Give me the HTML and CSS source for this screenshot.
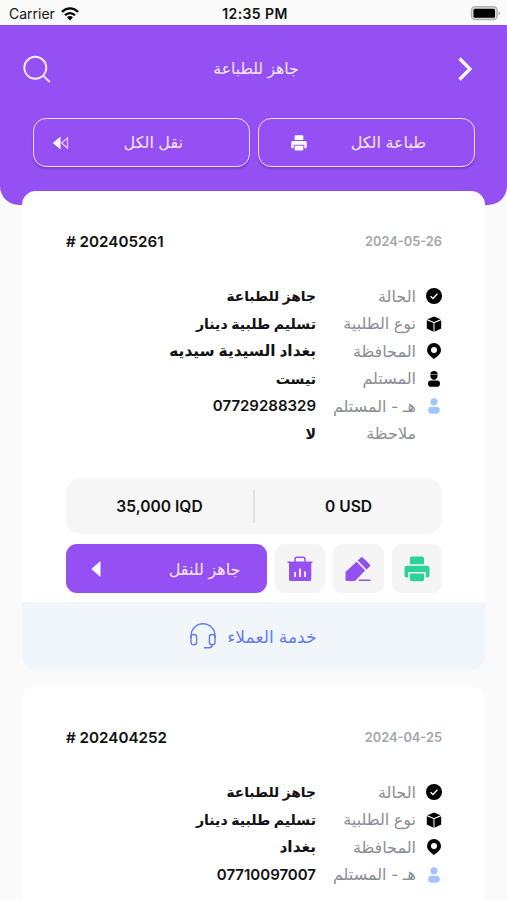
FILE: index.html
```html
<!DOCTYPE html>
<html lang="ar" dir="rtl">
<head>
    <meta charset="UTF-8">
    <meta name="viewport" content="width=device-width, initial-scale=1.0">
    <title>جاهز للطباعة</title>
    <link rel="stylesheet" href="styles.css">
</head>
<body>

    <!-- shared icons -->
    <svg class="defs">
        <symbol id="check" viewBox="0 0 16 16">
            <circle cx="8" cy="8" r="8"/>
            <path d="M4.6 8.2l2.4 2.3 4.4-4.8" fill="none" stroke="#fff" stroke-width="1.3"/>
        </symbol>
        <symbol id="box" viewBox="0 0 16 16">
            <path d="M8 .5l6.6 2.7L8 6 1.400 3.200zM.8 4.200l6.700 2.900v8.600L.8 12.600zM15.200 4.200L8.500 7.100v8.600l6.700-3.100z"/>
        </symbol>
        <symbol id="pin" viewBox="0 0 16 16">
            <path fill-rule="evenodd" d="M8 0a7 7 0 0 1 7 7c0 3.800-3.500 6.500-7 9C4.500 13.500 1 10.800 1 7a7 7 0 0 1 7-7zM8 4a3 3 0 1 0 0 6a3 3 0 0 0 0-6z"/>
        </symbol>
        <symbol id="courier" viewBox="0 0 16 16">
            <path d="M4.300 3.500C4.300 1 6 0 8 0s3.700 1 3.700 3.500z"/>
            <path d="M4.300 3.900h7.400c0 2.900-1.500 4.900-3.700 4.900s-3.700-2-3.700-4.900z"/>
            <rect x="2" y="9.400" width="12" height="6.400" rx="3.100"/>
        </symbol>
        <symbol id="user" viewBox="0 0 16 16">
            <circle cx="8" cy="3.800" r="3.600"/>
            <rect x="2.200" y="8.700" width="11.600" height="7" rx="3.400"/>
        </symbol>
        <symbol id="printer" viewBox="0 0 26 26">
            <path d="M6 8.300V2.200Q6 .5 7.700 .5h10.600Q20 .5 20 2.200v6.100z"/>
            <path d="M3 9.800h20q2.500 0 2.500 2.500v7q0 2.200-2.200 2.200h-1.600V16H4.300v5.500H2.700Q.5 21.500.5 19.300v-7Q.5 9.800 3 9.800z"/>
            <path d="M6 17.500h14v6q0 1.800-1.800 1.800H7.800Q6 25.300 6 23.500z"/>
        </symbol>
    </svg>

    <div class="status" dir="ltr">
        <div class="carrier">
            <span>Carrier</span>
            <svg width="18" height="14" viewBox="0 0 18 14">
                <g fill="none" stroke="#000" stroke-width="2.300">
                    <path d="M1 4.900C5.600 .2 12.400 .2 17 4.900"/>
                    <path d="M4 8.200C6.900 5.300 11.100 5.300 14 8.200"/>
                </g>
                <path d="M6 10.300q3-2.500 6 0L9 13.500z"/>
            </svg>
        </div>
        <div class="clock">12:35 PM</div>
        <div class="battery">
            <svg width="31" height="15" viewBox="0 0 31 15">
                <rect x="1.500" y=".8" width="25.500" height="12.800" rx="3.500" fill="#ddd" stroke="#b4b4b4" stroke-width="1.500"/>
                <rect x="3.500" y="2.700" width="21.500" height="9" rx="1.500"/>
                <path d="M28.500 5v4.400q3-2.200 0-4.400z" fill="#b4b4b4"/>
            </svg>
        </div>
    </div>

    <header class="header">
        <div class="title-bar">
            <svg width="14" height="24" viewBox="0 0 14 24" fill="none" stroke="#fff" stroke-width="3.200">
                <path d="M1.500 1.500L12 12 1.500 22.500"/>
            </svg>
            <h1>جاهز للطباعة</h1>
            <svg width="28" height="28" viewBox="0 0 28 28" fill="none" stroke="#f7e9ff" stroke-width="1.900">
                <circle cx="12.300" cy="12.800" r="11"/>
                <path d="M20.200 20.600l6.600 6.600"/>
            </svg>
        </div>
        <div class="all-btns">
            <button class="all-btn">
                <span>طباعة الكل</span>
                <svg class="print-all" width="16" height="16"><use href="#printer"/></svg>
            </button>
            <button class="all-btn move">
                <span>نقل الكل</span>
                <svg width="17" height="14" viewBox="0 0 17 14">
                    <path d="M8.500 .5v13L.8 7z" fill="#fff"/>
                    <path d="M15.500 2v10L9.600 7z" fill="none" stroke="#e6c8fb" stroke-width="1.300"/>
                </svg>
            </button>
        </div>
    </header>

    <main class="orders">
        <section class="card">
            <div class="card-head">
                <span class="date">2024-05-26</span>
                <span class="number" dir="ltr"># 202405261</span>
            </div>
            <div class="info">
                <div class="row">
                    <svg class="icon"><use href="#check"/></svg>
                    <span class="label">الحالة</span>
                    <span class="value state">جاهز للطباعة</span>
                </div>
                <div class="row">
                    <svg class="icon"><use href="#box"/></svg>
                    <span class="label">نوع الطلبية</span>
                    <span class="value">تسليم طلبية دينار</span>
                </div>
                <div class="row">
                    <svg class="icon"><use href="#pin"/></svg>
                    <span class="label">المحافظة</span>
                    <span class="value place">بغداد السيدية سيديه</span>
                </div>
                <div class="row">
                    <svg class="icon"><use href="#courier"/></svg>
                    <span class="label">المستلم</span>
                    <span class="value">تيست</span>
                </div>
                <div class="row">
                    <svg class="icon blue"><use href="#user"/></svg>
                    <span class="label">هـ - المستلم</span>
                    <span class="value phone">07729288329</span>
                </div>
                <div class="row">
                    <span class="icon"></span>
                    <span class="label">ملاحظة</span>
                    <span class="value">لا</span>
                </div>
            </div>
            <div class="price" dir="ltr">
                <span>35,000 IQD</span>
                <span>0 USD</span>
            </div>
            <div class="actions">
                <button class="square">
                    <svg class="green" width="26" height="26"><use href="#printer"/></svg>
                </button>
                <button class="square">
                    <svg width="26" height="26" viewBox="0 0 26 26" fill="#9450f3">
                        <path d="M11.500 5.700l8.700 8.700L10 24.900H1.300q-.8 0-.8-.8v-8.200z"/>
                        <path d="M12.700 4.500L15.800 1.400q1-1 2 0l7 7q1 1 0 2l-3.300 3z"/>
                        <path d="M14 23.500h11.500V25H14z"/>
                    </svg>
                </button>
                <button class="square">
                    <svg width="26" height="26" viewBox="0 0 26 26">
                        <path d="M8 6V3.200Q8 1.300 9.900 1.300h6.200Q18 1.300 18 3.200V6" fill="none" stroke="#9450f3" stroke-width="1.500"/>
                        <path d="M.5 5.400h25v1.700h-1.200v16.500q0 1.400-1.400 1.400H3.400Q2 25 2 23.600V7.100H.5z" fill="#9450f3"/>
                        <path d="M8 16v5M13 12.500V21M18 15.500V21" stroke="#f4e8ff" stroke-width="1.900"/>
                    </svg>
                </button>
                <button class="ready">
                    <span>جاهز للنقل</span>
                    <svg width="10" height="16" viewBox="0 0 10 16"><path d="M9.500 0v16L.3 8z" fill="#fff"/></svg>
                </button>
            </div>
            <div class="support">
                <span>خدمة العملاء</span>
                <svg width="26" height="26" viewBox="0 0 26 26" fill="none" stroke="#667cf0" stroke-width="1.400">
                    <path d="M1 15v-2.200a12 12 0 0 1 24 0V15"/>
                    <rect x="1" y="11.500" width="5.600" height="10.300" rx="2.500"/>
                    <rect x="19.400" y="11.500" width="5.600" height="10.300" rx="2.500"/>
                    <path d="M22.200 21.800q0 3-3 3H14"/>
                </svg>
            </div>
        </section>

        <section class="card last">
            <div class="card-head">
                <span class="date">2024-04-25</span>
                <span class="number" dir="ltr"># 202404252</span>
            </div>
            <div class="info">
                <div class="row">
                    <svg class="icon"><use href="#check"/></svg>
                    <span class="label">الحالة</span>
                    <span class="value state">جاهز للطباعة</span>
                </div>
                <div class="row">
                    <svg class="icon"><use href="#box"/></svg>
                    <span class="label">نوع الطلبية</span>
                    <span class="value">تسليم طلبية دينار</span>
                </div>
                <div class="row">
                    <svg class="icon"><use href="#pin"/></svg>
                    <span class="label">المحافظة</span>
                    <span class="value place">بغداد</span>
                </div>
                <div class="row">
                    <svg class="icon blue"><use href="#user"/></svg>
                    <span class="label">هـ - المستلم</span>
                    <span class="value phone">07710097007</span>
                </div>
            </div>
        </section>
    </main>

</body>
</html>
```

FILE: styles.css
```css
* {
    box-sizing: border-box;
}
body {
    margin: 0;
    background-color: #fafafa;
    font-family: Inter, "DejaVu Sans", sans-serif;
    font-size: 15px;
    color: #111;
}
button {
    border: none;
    padding: 0;
    font: inherit;
    font-size: 16px;
}
svg {
    display: block;
    flex: none;
}
.defs {
    display: none;
}

/* status bar */
.status {
    display: grid;
    grid-template-columns: 1fr auto 1fr;
    align-items: center;
    height: 25px;
    padding: 2px 6px 0 9px;
    font-size: 14px;
}
.carrier {
    display: flex;
    align-items: center;
    gap: 6px;
}
.clock {
    font-weight: 600;
    letter-spacing: 0.4px;
}
.battery {
    justify-self: end;
}

/* header */
.header {
    height: 180px;
    padding: 30px 32px 0 33px;
    background-color: #9450f3;
    border-radius: 0 0 19px 19px;
    color: #f6e6ff;
}
.title-bar {
    display: flex;
    align-items: center;
    justify-content: space-between;
    height: 28px;
    margin: 0 3px 0 -10px;
}
.title-bar h1 {
    margin: -2px 0 0 3px;
    font-size: 15.6px;
    font-weight: normal;
}
.all-btns {
    display: grid;
    grid-template-columns: 1fr 1fr;
    gap: 8px;
    margin-top: 35px;
}
.all-btn {
    display: flex;
    align-items: center;
    justify-content: space-between;
    height: 49px;
    padding: 0 48px 0 32px;
    border: 1.5px solid #f0dcff;
    border-radius: 13px;
    background-color: #9450f3;
    color: #f6e6ff;
    box-shadow: 0 2px 2px rgba(60, 20, 130, 0.3);
}
.all-btn.move {
    padding: 0 66px 0 18px;
}
.all-btn span {
    margin-top: -2px;
}
.print-all {
    fill: #fff;
}

/* orders */
.orders {
    margin: -14px 22px 0;
}
.card {
    height: 479px;
    margin-bottom: 17px;
    padding: 39px 43px 0 44px;
    border-radius: 14px;
    background-color: #fff;
    overflow: hidden;
}
.card.last {
    height: 213px;
    margin-bottom: 0;
    padding-bottom: 0;
    border-radius: 14px 14px 0 0;
}
.card-head {
    display: flex;
    align-items: center;
    justify-content: space-between;
    height: 22px;
    font-weight: 600;
}
.number {
    font-size: 15.2px;
}
.date {
    font-size: 12.8px;
    color: #a3a6ac;
}
.info {
    margin-top: 30px;
}
.row {
    display: flex;
    align-items: center;
    height: 27.5px;
}
.icon {
    width: 16px;
    height: 16px;
    flex: none;
    margin-top: 1px;
}
.blue {
    fill: #a5c4ff;
}
.label {
    width: 100px;
    margin-right: 10px;
    font-size: 16px;
    line-height: 20px;
    color: #8b8e94;
    white-space: nowrap;
}
.value {
    font-size: 14.1px;
    font-weight: 600;
    white-space: nowrap;
}
.value.state {
    font-size: 13.8px;
}
.value.place {
    font-size: 15.4px;
}
.value.phone {
    font-size: 15px;
}
.price {
    display: flex;
    align-items: center;
    height: 56px;
    margin-top: 31px;
    border-radius: 15px;
    background-color: #f6f6f6;
    font-size: 15.6px;
    font-weight: 600;
}
.price span {
    flex: 1;
    line-height: 33px;
    text-align: center;
}
.price span + span {
    border-left: 2px solid #e2e2e2;
}
.actions {
    display: flex;
    gap: 8px;
    margin-top: 10px;
}
.square {
    display: flex;
    align-items: center;
    justify-content: center;
    width: 50.5px;
    height: 49px;
    border-radius: 9px;
    background-color: #f5f5f5;
}
.green {
    fill: #2ed19a;
}
.ready {
    display: flex;
    flex: 1;
    align-items: center;
    justify-content: space-between;
    padding: 0 26px 0 25px;
    border-radius: 11px;
    background-color: #9450f3;
    color: #f6e6ff;
}
.support {
    display: flex;
    align-items: center;
    justify-content: center;
    gap: 11px;
    height: 68px;
    margin: 9px -43px 0 -44px;
    background-color: #f0f6fa;
    color: #667cf0;
    font-size: 17.2px;
}
```
